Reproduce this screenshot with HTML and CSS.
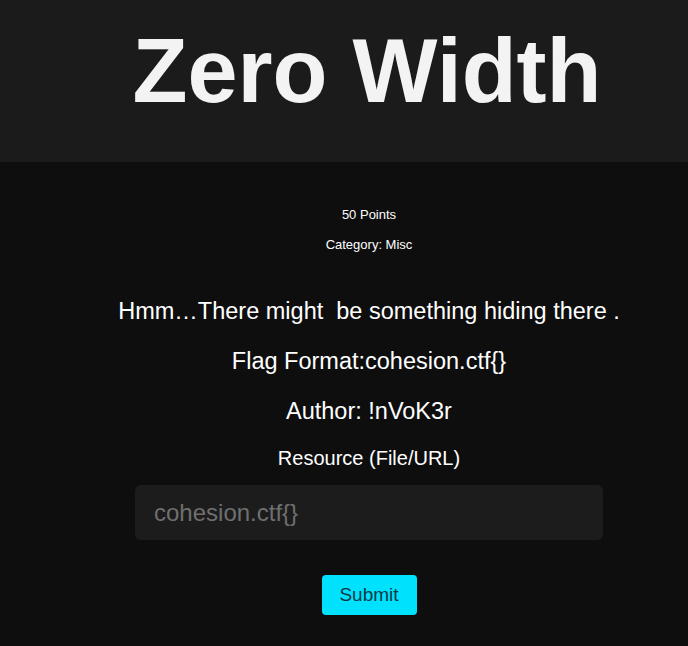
FILE: index.html
```html
<!DOCTYPE html>
<html>
<head>
<meta charset="utf-8">
<link rel="stylesheet" href="styles.css">
</head>
<body>
<header class="hero">
  <h1 class="title">Zero Width</h1>
</header>
<main class="challenge">
  <p class="meta">50 Points</p>
  <p class="meta">Category: Misc</p>
  <p class="desc first">Hmm…There might&nbsp; be something hiding there .</p>
  <p class="desc">Flag Format:cohesion.ctf{}</p>
  <p class="desc">Author: !nVoK3r</p>
  <p class="label">Resource (File/URL)</p>
  <form class="flag-form">
    <input class="flag-input" type="text" placeholder="cohesion.ctf{}">
    <button class="submit" type="button">Submit</button>
  </form>
</main>
</body>
</html>
```
FILE: styles.css
```css
html, body {
  margin: 0;
  padding: 0;
  background: #0e0e0e;
  font-family: "Liberation Sans", Arial, sans-serif;
  color: #ffffff;
}
.hero {
  box-sizing: border-box;
  height: 162px;
  background: #1b1b1b;
  padding: 20px 0 0 46px;
}
.title {
  margin: 0;
  text-align: center;
  font-size: 90px;
  font-weight: bold;
  line-height: normal;
  color: #f3f3f3;
}
.challenge {
  display: flex;
  flex-direction: column;
  align-items: center;
  padding: 38px 0 0 50px;
}
.challenge p {
  margin: 0;
  text-align: center;
}
.meta {
  font-size: 13px;
  line-height: 30px;
}
.desc {
  font-size: 23.5px;
  line-height: 40px;
  margin-top: 10px !important;
}
.desc.first {
  margin-top: 31px !important;
}
.label {
  font-size: 20px;
  line-height: 30px;
  margin-top: 12px !important;
}
.flag-form {
  display: flex;
  flex-direction: column;
  align-items: center;
  margin-top: 12px;
}
.flag-input {
  box-sizing: border-box;
  width: 468px;
  height: 55px;
  border: none;
  border-radius: 6px;
  background: #1c1c1c;
  padding: 0 19px;
  font-family: "Liberation Sans", Arial, sans-serif;
  font-size: 24px;
  color: #ddd;
  outline: none;
}
.flag-input::placeholder {
  color: #6f6f6f;
}
.submit {
  margin-top: 35px;
  width: 95px;
  height: 40px;
  border: none;
  border-radius: 4px;
  background: #00e1fd;
  color: #0f3a44;
  font-family: "Liberation Sans", Arial, sans-serif;
  font-size: 19px;
  padding: 0;
}
```
